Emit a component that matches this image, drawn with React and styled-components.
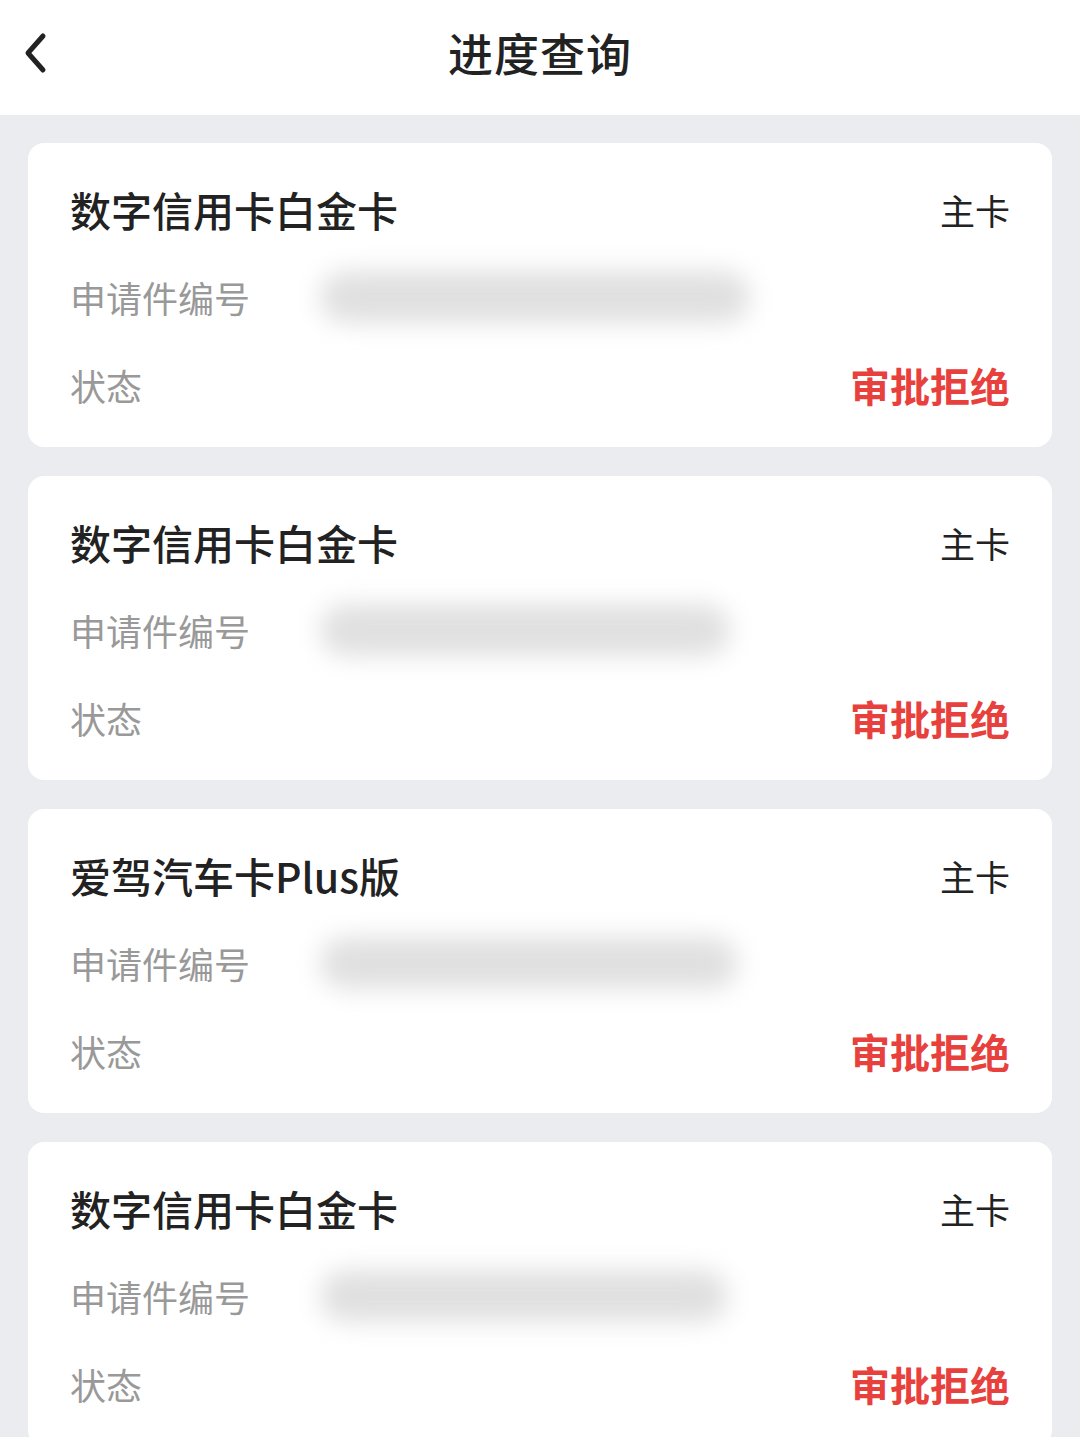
import React from 'react';
import styled, { createGlobalStyle } from 'styled-components';

const GlobalStyle = createGlobalStyle`
  html, body {
    margin: 0;
    padding: 0;
    background: #ebecef;
    font-family: "Noto Sans CJK SC", "Noto Sans", sans-serif;
  }
`;

const applications = [
  { name: '数字信用卡白金卡', type: '主卡', status: '审批拒绝', mask: 430 },
  { name: '数字信用卡白金卡', type: '主卡', status: '审批拒绝', mask: 410 },
  { name: '爱驾汽车卡Plus版', type: '主卡', status: '审批拒绝', mask: 418 },
  { name: '数字信用卡白金卡', type: '主卡', status: '审批拒绝', mask: 408 },
];

export default function App() {
  return (
    <Page>
      <GlobalStyle />
      <Header>
        <BackButton>
          <svg width="30" height="44" viewBox="0 0 30 44" fill="none">
            <polyline
              points="21,5 6,22 21,39"
              stroke="#222"
              strokeWidth="5"
              strokeLinecap="round"
              strokeLinejoin="round"
            />
          </svg>
        </BackButton>
        <Title>进度查询</Title>
      </Header>
      <List>
        {applications.map((item, index) => (
          <Card key={index}>
            <Row>
              <CardName>{item.name}</CardName>
              <CardType>{item.type}</CardType>
            </Row>
            <Row>
              <Label>申请件编号</Label>
              <Masked $width={item.mask} />
            </Row>
            <Row>
              <Label>状态</Label>
              <Status>{item.status}</Status>
            </Row>
          </Card>
        ))}
      </List>
    </Page>
  );
}

const Page = styled.div`
  min-height: 100vh;
  background: #ebecef;
`;

const Header = styled.div`
  height: 115px;
  background: #fff;
  display: flex;
  align-items: center;
  justify-content: center;
  position: relative;
`;

const BackButton = styled.div`
  position: absolute;
  left: 22px;
  top: 31px;
  display: flex;
`;

const Title = styled.h1`
  margin: 0 0 10px;
  font-size: 45px;
  font-weight: 500;
  color: #222;
  letter-spacing: 1px;
`;

const List = styled.div`
  padding: 28px 28px 0;
  display: flex;
  flex-direction: column;
  gap: 29px;
`;

const Card = styled.div`
  background: #fff;
  border-radius: 16px;
  padding: 22px 42px 18px;
`;

const Row = styled.div`
  height: 88px;
  display: flex;
  align-items: center;
`;

const CardName = styled.div`
  flex: 1;
  font-size: 41px;
  font-weight: 500;
  color: #222;
`;

const CardType = styled.div`
  font-size: 35px;
  color: #222;
`;

const Label = styled.div`
  width: 250px;
  font-size: 36px;
  color: #999;
`;

const Masked = styled.div`
  width: ${(p) => p.$width}px;
  height: 52px;
  border-radius: 26px;
  background: #e0e0e0;
  filter: blur(12px);
`;

const Status = styled.div`
  margin-left: auto;
  font-size: 40px;
  font-weight: 700;
  color: #e8403c;
`;
